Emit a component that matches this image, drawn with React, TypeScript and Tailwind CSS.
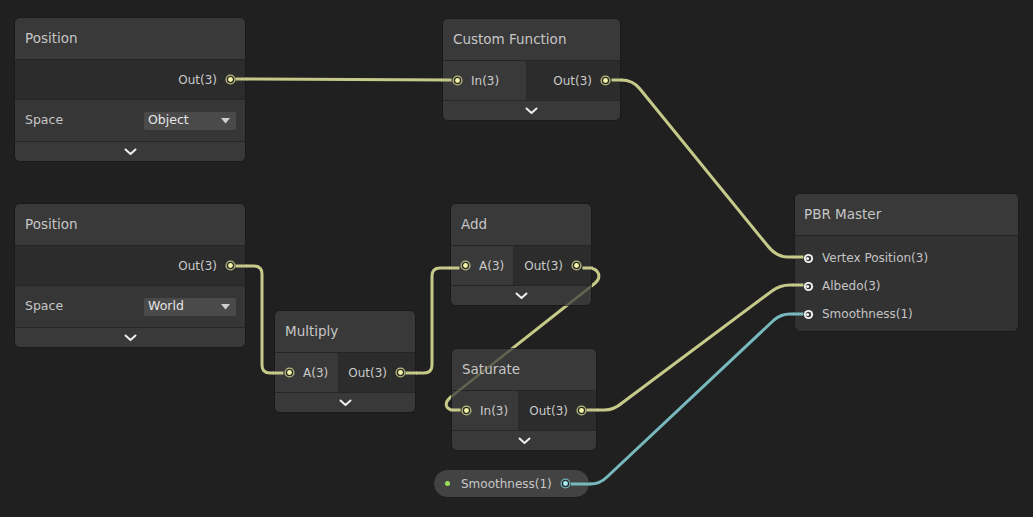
import React from 'react'

const YELLOW = '#c5c989'
const CYAN = '#78b9be'

type Pt = { x: number; y: number }

function Port({ color = 'yellow' }: { color?: 'yellow' | 'cyan' }) {
  const ring = color === 'yellow' ? '#b9bc7c' : '#6fb2b8'
  const dot = color === 'yellow' ? '#f2f3a6' : '#a6eef5'
  return (
    <svg width="11" height="11" viewBox="0 0 11 11" className="shrink-0">
      <circle cx="5.5" cy="5.5" r="4.4" fill="#2b2b2b" stroke={ring} strokeWidth="1.3" />
      <circle cx="5.5" cy="5.5" r="2.4" fill={dot} />
    </svg>
  )
}

// master node input port (white, connected)
function MasterPort() {
  return (
    <svg width="11" height="11" viewBox="0 0 11 11" className="shrink-0">
      <circle cx="5.5" cy="5.5" r="4.6" fill="#f4f4f4" />
      <circle cx="5.5" cy="5.5" r="2.7" fill="#3a3a3a" />
      <circle cx="4.6" cy="5.5" r="1.5" fill="#f4f4f4" />
    </svg>
  )
}

function Chevron() {
  return (
    <svg width="13" height="8" viewBox="0 0 13 8">
      <path d="M1.5 1.5 L6.5 6 L11.5 1.5" fill="none" stroke="#eeeeee" strokeWidth="2" strokeLinecap="round" strokeLinejoin="round" />
    </svg>
  )
}

function Node({ pos, w, title, children }: { pos: Pt; w: number; title: string; children: React.ReactNode }) {
  return (
    <div
      className="absolute flex flex-col rounded-[6px] border border-[#1a1a1a] overflow-hidden bg-[#2c2c2c]"
      style={{ left: pos.x, top: pos.y, width: w }}
    >
      <div className="h-[42px] shrink-0 flex items-center pl-[10px] bg-[#393939] border-b border-[#252525] text-[13.5px] text-[#c6c6c6]">
        {title}
      </div>
      {children}
    </div>
  )
}

function Collapse() {
  return (
    <div className="h-[20px] shrink-0 flex items-center justify-center bg-[#393939] border-t border-[#262626]">
      <Chevron />
    </div>
  )
}

function InOutRow({ left, inLabel, outLabel }: { left: number; inLabel: string; outLabel: string }) {
  return (
    <div className="h-[39px] flex text-[12px] text-[#cacaca]">
      <div className="flex items-center gap-[8px] pl-[9px] bg-[#393939] border-r border-[#2a2a2a]" style={{ width: left }}>
        <Port />
        <span>{inLabel}</span>
      </div>
      <div className="flex-1 flex items-center justify-end gap-[8px] pr-[9px] bg-[#2c2c2c]">
        <span>{outLabel}</span>
        <Port />
      </div>
    </div>
  )
}

function PositionNode({ pos, space }: { pos: Pt; space: string }) {
  return (
    <Node pos={pos} w={232} title="Position">
      <div className="h-[39px] flex items-center justify-end gap-[8px] pr-[9px] bg-[#2c2c2c] text-[12px] text-[#cacaca]">
        <span>Out(3)</span>
        <Port />
      </div>
      <div className="h-[42px] flex items-center justify-between pl-[10px] pr-[9px] bg-[#363636] border-t border-[#262626] text-[12.5px] text-[#c6c6c6]">
        <span>Space</span>
        <div className="w-[92px] h-[18px] flex items-center justify-between pl-[4px] pr-[6px] rounded-[2px] bg-[#4a4a4a] text-[#e6e6e6]">
          <span>{space}</span>
          <svg width="9" height="6" viewBox="0 0 9 6">
            <path d="M0 0 H9 L4.5 5.5 Z" fill="#d0d0d0" />
          </svg>
        </div>
      </div>
      <Collapse />
    </Node>
  )
}

const wires: { d: string; color: string }[] = [
  { d: 'M235.5 79 L452 80', color: YELLOW },
  { d: 'M611 80 H621 Q633 80 640 89 L767 245 Q776 257 788 257 H804', color: YELLOW },
  { d: 'M235.5 266 H254 Q262 266 262 274 V365 Q262 373 270 373 H284', color: YELLOW },
  { d: 'M405.5 373 H424 Q432 373 432 365 V276 Q432 268 440 268 H460', color: YELLOW },
  { d: 'M582.5 268 H588 C600 268 602 278 594 284 L452 396 C443 403 445 410 455 410 H461', color: YELLOW },
  { d: 'M586.5 410 H604 Q614 410 622 403 L772 291 Q780 285 790 285 H804', color: YELLOW },
  { d: 'M571 484 H590 Q600 484 607 477 L774 320 Q781 314 790 314 H804', color: CYAN },
]

// short segments between port and node edge, drawn over nodes
const stubs: { d: string; color: string }[] = [
  { d: 'M235.5 79 H247', color: YELLOW },
  { d: 'M441 80 H451.5', color: YELLOW },
  { d: 'M611.5 80 H622', color: YELLOW },
  { d: 'M235.5 266 H247', color: YELLOW },
  { d: 'M273 373 H283.5', color: YELLOW },
  { d: 'M405.5 373 H417', color: YELLOW },
  { d: 'M449 268 H459.5', color: YELLOW },
  { d: 'M582.5 268 H593', color: YELLOW },
  { d: 'M450 410 H460.5', color: YELLOW },
  { d: 'M586.5 410 H598', color: YELLOW },
  { d: 'M793 257 H803.5', color: YELLOW },
  { d: 'M793 285 H803.5', color: YELLOW },
  { d: 'M793 314 H803.5', color: CYAN },
  { d: 'M571 484 H591', color: CYAN },
]

export default function App() {
  return (
    <div className="relative w-[1033px] h-[517px] overflow-hidden bg-[#202020] font-['DejaVu_Sans',sans-serif]">
      <svg className="absolute inset-0" width="1033" height="517">
        {wires.map((w, i) => (
          <path key={i} d={w.d} fill="none" stroke={w.color} strokeWidth="3" strokeLinecap="round" />
        ))}
      </svg>

      <PositionNode pos={{ x: 14, y: 17 }} space="Object" />
      <PositionNode pos={{ x: 14, y: 203 }} space="World" />

      <Node pos={{ x: 442, y: 18 }} w={179} title="Custom Function">
        <InOutRow left={84} inLabel="In(3)" outLabel="Out(3)" />
        <Collapse />
      </Node>

      <Node pos={{ x: 274, y: 310 }} w={142} title="Multiply">
        <InOutRow left={64} inLabel="A(3)" outLabel="Out(3)" />
        <Collapse />
      </Node>

      <Node pos={{ x: 450, y: 203 }} w={142} title="Add">
        <InOutRow left={63} inLabel="A(3)" outLabel="Out(3)" />
        <Collapse />
      </Node>

      <Node pos={{ x: 451, y: 348 }} w={146} title="Saturate">
        <InOutRow left={67} inLabel="In(3)" outLabel="Out(3)" />
        <Collapse />
      </Node>

      <div className="absolute left-[794px] top-[193px] w-[225px] rounded-[6px] border border-[#1a1a1a] overflow-hidden bg-[#323232]">
        <div className="h-[42px] flex items-center pl-[9px] bg-[#393939] border-b border-[#252525] text-[13.5px] text-[#c6c6c6]">
          PBR Master
        </div>
        <div className="flex flex-col pt-[8px] pb-[3px] text-[12px] text-[#c4c4c4]">
          {['Vertex Position(3)', 'Albedo(3)', 'Smoothness(1)'].map((label) => (
            <div key={label} className="h-[28px] flex items-center gap-[8px] pl-[8px]">
              <MasterPort />
              <span>{label}</span>
            </div>
          ))}
        </div>
      </div>

      <div className="absolute left-[433px] top-[469px] w-[157px] h-[29px] flex items-center pl-[11px] pr-[18px] rounded-full bg-[#434343] border border-[#1e1e1e] text-[12px] text-[#c8c8c8]">
        <span className="w-[5px] h-[5px] rounded-full bg-[#98e05a]" />
        <span className="ml-[11px]">Smoothness(1)</span>
        <span className="ml-auto flex">
          <Port color="cyan" />
        </span>
      </div>

      <svg className="absolute inset-0 pointer-events-none" width="1033" height="517">
        <path d={wires[4].d} fill="none" stroke={YELLOW} strokeWidth="2.5" strokeOpacity="0.3" />
        {stubs.map((s, i) => (
          <path key={i} d={s.d} fill="none" stroke={s.color} strokeWidth="3" />
        ))}
      </svg>
    </div>
  )
}
